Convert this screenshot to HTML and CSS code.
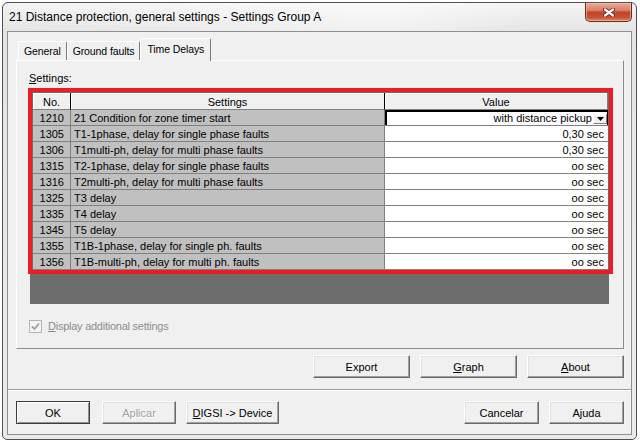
FILE: index.html
```html
<!DOCTYPE html>
<html>
<head>
<meta charset="utf-8">
<title>Settings Group A</title>
<link rel="stylesheet" href="styles.css">
</head>
<body>
<div class="window">
  <div class="titlebar">
    <span class="title">21 Distance protection, general settings - Settings Group A</span>
    <span class="close">
      <svg width="12" height="9" viewBox="0 0 12 9">
        <path d="M2 1.5 L10 7.5 M10 1.5 L2 7.5" stroke="#6a2618" stroke-width="4" stroke-linecap="round"/>
        <path d="M2 1.5 L10 7.5 M10 1.5 L2 7.5" stroke="#ffffff" stroke-width="2.2" stroke-linecap="round"/>
      </svg>
    </span>
  </div>
  <div class="client">
    <div class="tabarea">
      <div class="tabs">
        <div class="tab">General</div>
        <div class="tab">Ground faults</div>
        <div class="tab active">Time Delays</div>
      </div>
      <div class="panel">
        <div class="label"><u>S</u>ettings:</div>
        <div class="gridwrap">
          <div class="grid">
            <table class="sheet">
              <colgroup><col class="c-no"><col class="c-name"><col class="c-val"></colgroup>
              <thead>
                <tr><th class="h-no">No.</th><th class="h-name">Settings</th><th class="h-val">Value</th></tr>
              </thead>
              <tbody>
                <tr><td class="no">1210</td><td class="name">21 Condition for zone timer start</td><td class="val focus"><div class="combo"><span>with distance pickup</span><span class="drop"><svg width="7" height="4" viewBox="0 0 7 4"><polygon points="0,0 7,0 3.5,4" fill="#000"/></svg></span></div></td></tr>
                <tr><td class="no">1305</td><td class="name">T1-1phase, delay for single phase faults</td><td class="val">0,30 sec</td></tr>
                <tr><td class="no">1306</td><td class="name">T1multi-ph, delay for multi phase faults</td><td class="val">0,30 sec</td></tr>
                <tr><td class="no">1315</td><td class="name">T2-1phase, delay for single phase faults</td><td class="val">oo sec</td></tr>
                <tr><td class="no">1316</td><td class="name">T2multi-ph, delay for multi phase faults</td><td class="val">oo sec</td></tr>
                <tr><td class="no">1325</td><td class="name">T3 delay</td><td class="val">oo sec</td></tr>
                <tr><td class="no">1335</td><td class="name">T4 delay</td><td class="val">oo sec</td></tr>
                <tr><td class="no">1345</td><td class="name">T5 delay</td><td class="val">oo sec</td></tr>
                <tr><td class="no">1355</td><td class="name">T1B-1phase, delay for single ph. faults</td><td class="val">oo sec</td></tr>
                <tr><td class="no">1356</td><td class="name">T1B-multi-ph, delay for multi ph. faults</td><td class="val">oo sec</td></tr>
              </tbody>
            </table>
          </div>
          <div class="highlight"></div>
        </div>
        <div class="check">
          <span class="box"><svg width="9" height="9" viewBox="0 0 9 9"><path d="M1 4.5 L3.5 7 L8 1.5" stroke="#a0a0a0" stroke-width="1.8" fill="none"/></svg></span>
          <span class="check-text"><u>D</u>isplay additional settings</span>
        </div>
      </div>
    </div>
    <div class="toolrow">
      <div class="btn w97">Export</div>
      <div class="btn w97"><u>G</u>raph</div>
      <div class="btn w97"><u>A</u>bout</div>
    </div>
    <div class="sep"></div>
    <div class="bottomrow">
      <div class="btn default w74">OK</div>
      <div class="btn disabled w74 gap12">Aplicar</div>
      <div class="btn w93 gap10"><u>D</u>IGSI -&gt; Device</div>
      <div class="spacer"></div>
      <div class="btn w75">Cancelar</div>
      <div class="btn w75 gap10">Ajuda</div>
    </div>
  </div>
</div>
</body>
</html>
```
FILE: styles.css
```css
* { box-sizing: border-box; }
html, body { margin: 0; padding: 0; }
body {
  width: 640px;
  height: 444px;
  overflow: hidden;
  background: #ffffff;
  font-family: "Liberation Sans", Arial, sans-serif;
  font-size: 11px;
  color: #000;
}
.window {
  margin: 2px 0 0 2px;
  width: 635px;
  height: 438px;
  border: 1px solid #505050;
  border-radius: 6px 6px 5px 5px;
  background: linear-gradient(180deg, #f4f4f4 0, #e4e4e4 28px, #eaeaea 100%);
  padding: 0 4px 4px 4px;
  display: flex;
  flex-direction: column;
}
.titlebar {
  height: 28px;
  display: flex;
  justify-content: space-between;
  align-items: flex-start;
  background: linear-gradient(90deg, rgba(255,255,255,0) 0, rgba(255,255,255,0.5) 60%, rgba(255,255,255,0) 85%);
}
.title {
  font-size: 12px;
  line-height: 14px;
  padding: 7px 0 0 2px;
  color: #000;
}
.close {
  width: 47px;
  height: 19px;
  border: 1px solid #6b2a1e;
  border-top: none;
  border-radius: 0 0 5px 5px;
  background: linear-gradient(180deg, #e9a996 0, #d9826b 40%, #c5432a 52%, #c95334 80%, #dc8a6a 100%);
  display: flex;
  align-items: center;
  justify-content: center;
  box-shadow: inset 0 0 0 1px rgba(255,210,190,0.5);
}
.client {
  height: 404px;
  border: 1px solid #8e8e8e;
  background: #f0f0f0;
  padding-top: 6px;
  display: flex;
  flex-direction: column;
}
.tabarea { padding: 0 7px 0 8px; }
.tabs {
  height: 22px;
  display: flex;
  align-items: flex-end;
  padding-left: 2px;
  position: relative;
  z-index: 1;
  font-size: 10.5px;
  letter-spacing: -0.1px;
}
.tab {
  height: 19px;
  line-height: 18px;
  padding: 0 5px;
  border: 1px solid;
  border-color: #ffffff #7a7a7a transparent #ffffff;
  border-bottom: none;
  border-radius: 2px 2px 0 0;
  background: #f0f0f0;
  white-space: nowrap;
}
.tab.active {
  height: 23px;
  line-height: 20px;
  margin-bottom: -1px;
  padding: 0 6px;
}
.panel {
  width: 608px;
  height: 289px;
  border: 1px solid;
  border-color: #ffffff #8c8c8c #8c8c8c #ffffff;
  padding: 10px 0 0 13px;
}
.label {
  height: 14px;
  line-height: 14px;
  margin: 0 0 5px -1px;
}
.gridwrap {
  position: relative;
  width: 579px;
  height: 214px;
}
.grid {
  width: 579px;
  height: 214px;
  background: #6d6d6d;
  padding: 3px 0 0 3px;
}
.highlight {
  position: absolute;
  left: -2px;
  top: -2px;
  width: 585px;
  height: 186px;
  border: 4px solid #ec1c24;
}
.sheet {
  width: 575px;
  table-layout: fixed;
  border-collapse: separate;
  border-spacing: 0;
}
.c-no { width: 38px; }
.c-name { width: 314px; }
.c-val { width: 223px; }
.sheet th {
  height: 17px;
  padding: 1px 0 0;
  font-weight: normal;
  text-align: center;
  background: #f0f0f0;
  border-bottom: 1px solid #808080;
  box-shadow: inset 1px 1px 0 #ffffff;
  line-height: 14px;
}
.h-no, .h-name { border-right: 1px solid #000; }
.h-val { border-right: 1px solid #808080; }
.sheet td {
  height: 16px;
  padding: 1px 0 0;
  line-height: 14px;
  white-space: nowrap;
  overflow: hidden;
  border-bottom: 1px solid #808080;
}
td.no {
  background: #c0c0c0;
  text-align: right;
  padding-right: 6px;
  border-right: 1px solid #808080;
}
td.name {
  background: #c0c0c0;
  padding-left: 3px;
  border-right: 1px solid #808080;
}
td.val {
  background: #ffffff;
  text-align: right;
  padding-right: 4px;
}
.sheet td.focus { padding: 0; }
.combo {
  height: 15px;
  border-top: 2px solid #000;
  border-left: 2px solid #000;
  border-right: 1px solid #000;
  display: flex;
  justify-content: flex-end;
  align-items: center;
  line-height: 13px;
}
.drop {
  width: 14px;
  height: 10px;
  margin: 0 0 0 1px;
  background: #f0f0f0;
  border: 1px solid;
  border-color: #ffffff #808080 #808080 #ffffff;
  display: flex;
  align-items: center;
  justify-content: center;
}
.check {
  margin: 16px 0 0 -1px;
  height: 13px;
  display: flex;
  align-items: center;
  color: #8d8d8d;
}
.box {
  width: 13px;
  height: 13px;
  border: 1px solid #b5b5b5;
  background: #f4f4f4;
  display: flex;
  align-items: center;
  justify-content: center;
  margin-right: 6px;
}
.check-text { line-height: 13px; letter-spacing: -0.25px; }
.btn {
  height: 23px;
  display: flex;
  align-items: center;
  justify-content: center;
  background: #f0f0f0;
  border: 1px solid;
  border-color: #ffffff #696969 #696969 #ffffff;
  box-shadow: inset -1px -1px 0 #a0a0a0, inset 1px 1px 0 #e3e3e3;
  white-space: nowrap;
}
.btn.default {
  border-color: #3c3c3c;
  box-shadow: inset 1px 1px 0 #ffffff, inset -1px -1px 0 #909090;
}
.btn.disabled {
  color: #a0a0a0;
  text-shadow: 1px 1px 0 #ffffff;
}
.w97 { width: 97px; }
.w93 { width: 93px; }
.w74 { width: 74px; }
.w75 { width: 75px; }
.gap10 { margin-left: 10px; }
.gap12 { margin-left: 12px; }
.toolrow {
  margin-top: 6px;
  padding-right: 7px;
  display: flex;
  justify-content: flex-end;
  gap: 10px;
}
.sep {
  margin: 11px 0 10px;
  height: 2px;
  border-top: 1px solid #a0a0a0;
  border-bottom: 1px solid #ffffff;
}
.bottomrow {
  display: flex;
  padding: 0 7px 0 8px;
}
.spacer { flex: 1; }
```
